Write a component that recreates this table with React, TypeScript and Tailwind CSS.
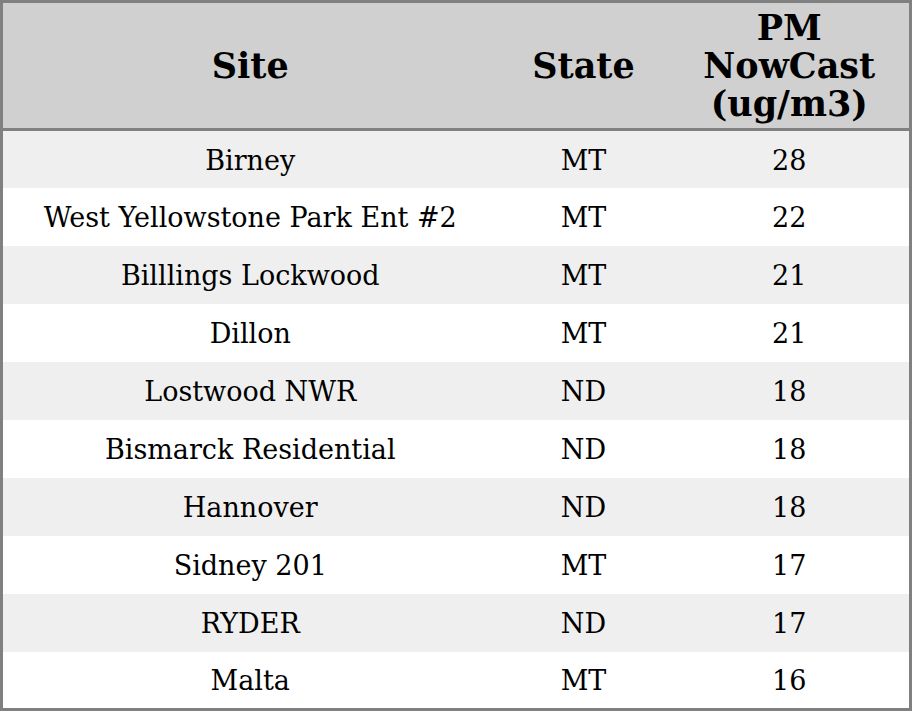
const rows: [string, string, number][] = [
  ["Birney", "MT", 28],
  ["West Yellowstone Park Ent #2", "MT", 22],
  ["Billlings Lockwood", "MT", 21],
  ["Dillon", "MT", 21],
  ["Lostwood NWR", "ND", 18],
  ["Bismarck Residential", "ND", 18],
  ["Hannover", "ND", 18],
  ["Sidney 201", "MT", 17],
  ["RYDER", "ND", 17],
  ["Malta", "MT", 16],
];

export default function App() {
  return (
    <div className="h-[711px] w-[912px] bg-white font-['DejaVu_Serif',serif] text-black">
      <table className="h-full w-full table-fixed border-collapse border-[3px] border-[#808080]">
        <colgroup>
          <col className="w-[496px]" />
          <col className="w-[172px]" />
          <col />
        </colgroup>
        <thead>
          <tr className="h-[128px] border-b-[3px] border-[#808080] bg-[#d0d0d0] text-[35px] font-bold leading-[38px]">
            <th className="text-center">Site</th>
            <th className="text-center">State</th>
            <th className="text-center">
              PM
              <br />
              NowCast
              <br />
              (ug/m3)
            </th>
          </tr>
        </thead>
        <tbody className="text-[27px]">
          {rows.map(([site, state, pm], i) => (
            <tr key={site} className={i % 2 === 0 ? "h-[58px] bg-[#efefef]" : "h-[58px] bg-white"}>
              <td className="pt-[3px] text-center">{site}</td>
              <td className="pt-[3px] text-center">{state}</td>
              <td className="pt-[3px] text-center">{pm}</td>
            </tr>
          ))}
        </tbody>
      </table>
    </div>
  );
}
